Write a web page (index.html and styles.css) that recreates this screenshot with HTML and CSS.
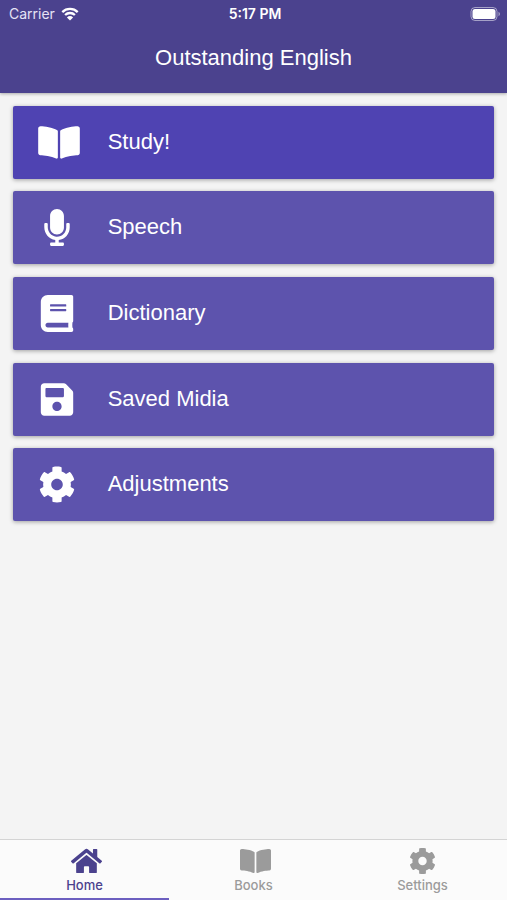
FILE: index.html
```html
<!DOCTYPE html>
<html lang="en">
<head>
<meta charset="utf-8">
<meta name="viewport" content="width=device-width, initial-scale=1">
<title>Outstanding English</title>
<link rel="stylesheet" href="styles.css">
</head>
<body>
<svg class="symbols" aria-hidden="true">
  <symbol id="book-open" viewBox="0 0 576 512"><path d="M542.22 32.05c-54.8 3.11-163.72 14.43-230.96 55.59-4.64 2.84-7.27 7.89-7.27 13.17v363.87c0 11.55 12.63 18.85 23.28 13.49 69.18-34.82 169.23-44.32 218.7-46.92 16.89-.89 30.02-14.43 30.02-30.66V62.75c.01-17.71-15.35-31.74-33.77-30.7zM264.73 87.64C197.5 46.48 88.58 35.17 33.78 32.05 15.36 31.01 0 45.04 0 62.75V400.6c0 16.24 13.13 29.78 30.02 30.66 49.49 2.6 149.59 12.11 218.77 46.95 10.62 5.35 23.21-1.94 23.21-13.46V100.63c0-5.29-2.62-10.14-7.27-12.99z"/></symbol>
  <symbol id="microphone" viewBox="0 0 352 512"><path d="M176 352c53.02 0 96-42.98 96-96V96c0-53.02-42.98-96-96-96S80 42.98 80 96v160c0 53.02 42.98 96 96 96zm160-160h-16c-8.84 0-16 7.16-16 16v48c0 74.8-64.49 134.82-140.79 127.38C96.71 376.89 48 317.11 48 250.3V208c0-8.84-7.16-16-16-16H16c-8.84 0-16 7.16-16 16v40.16c0 89.64 63.97 169.55 152 181.69V464H96c-8.84 0-16 7.16-16 16v16c0 8.84 7.16 16 16 16h160c8.84 0 16-7.16 16-16v-16c0-8.84-7.16-16-16-16h-56v-33.77C285.71 418.47 352 344.9 352 256v-48c0-8.84-7.16-16-16-16z"/></symbol>
  <symbol id="book" viewBox="0 0 448 512"><path d="M448 360V24c0-13.3-10.7-24-24-24H96C43 0 0 43 0 96v320c0 53 43 96 96 96h328c13.3 0 24-10.7 24-24v-16c0-7.5-3.5-14.3-8.9-18.7-4.2-15.4-4.2-59.3 0-74.7 5.4-4.3 8.9-11.1 8.9-18.6zM128 134c0-3.3 2.7-6 6-6h212c3.3 0 6 2.7 6 6v20c0 3.3-2.7 6-6 6H134c-3.3 0-6-2.7-6-6v-20zm0 64c0-3.3 2.7-6 6-6h212c3.3 0 6 2.7 6 6v20c0 3.3-2.7 6-6 6H134c-3.3 0-6-2.7-6-6v-20zm253.4 250H96c-17.7 0-32-14.3-32-32 0-17.6 14.4-32 32-32h285.4c-1.9 17.1-1.9 46.9 0 64z"/></symbol>
  <symbol id="save" viewBox="0 0 448 512"><path d="M433.941 129.941l-83.882-83.882A48 48 0 0 0 316.118 32H48C21.49 32 0 53.49 0 80v352c0 26.51 21.49 48 48 48h352c26.51 0 48-21.49 48-48V163.882a48 48 0 0 0-14.059-33.941zM224 416c-35.346 0-64-28.654-64-64 0-35.346 28.654-64 64-64s64 28.654 64 64c0 35.346-28.654 64-64 64zm96-304.52V212c0 6.627-5.373 12-12 12H76c-6.627 0-12-5.373-12-12V108c0-6.627 5.373-12 12-12h228.52c3.183 0 6.235 1.264 8.485 3.515l3.48 3.48A11.996 11.996 0 0 1 320 111.48z"/></symbol>
  <symbol id="cog" viewBox="0 0 512 512"><path d="M487.4 315.7l-42.6-24.6c4.3-23.2 4.3-47 0-70.2l42.6-24.6c4.9-2.8 7.1-8.6 5.5-14-11.1-35.6-30-67.8-54.7-94.6-3.8-4.1-10-5.1-14.8-2.3L380.8 110c-17.9-15.4-38.5-27.3-60.8-35.1V25.8c0-5.6-3.9-10.5-9.4-11.7-36.7-8.2-74.3-7.8-109.2 0-5.5 1.2-9.4 6.1-9.4 11.7V75c-22.2 7.9-42.8 19.8-60.8 35.1L88.7 85.5c-4.9-2.8-11-1.9-14.8 2.3-24.7 26.7-43.6 58.9-54.7 94.6-1.7 5.4.6 11.2 5.5 14L67.3 221c-4.3 23.2-4.3 47 0 70.2l-42.6 24.6c-4.9 2.8-7.1 8.6-5.5 14 11.1 35.6 30 67.8 54.7 94.6 3.8 4.1 10 5.1 14.8 2.3l42.6-24.6c17.9 15.4 38.5 27.3 60.8 35.1v49.2c0 5.6 3.9 10.5 9.4 11.7 36.7 8.2 74.3 7.8 109.2 0 5.5-1.2 9.4-6.1 9.4-11.7v-49.2c22.2-7.9 42.8-19.8 60.8-35.1l42.6 24.6c4.9 2.8 11 1.9 14.8-2.3 24.7-26.7 43.6-58.9 54.7-94.6 1.5-5.5-.7-11.3-5.6-14.1zM256 336c-44.1 0-80-35.9-80-80s35.9-80 80-80 80 35.9 80 80-35.9 80-80 80z"/></symbol>
  <symbol id="home" viewBox="0 0 576 512"><path d="M280.37 148.26L96 300.11V464a16 16 0 0 0 16 16l112.06-.29a16 16 0 0 0 15.92-16V368a16 16 0 0 1 16-16h64a16 16 0 0 1 16 16v95.64a16 16 0 0 0 16 16.05L464 480a16 16 0 0 0 16-16V300L295.67 148.26a12.19 12.19 0 0 0-15.3 0zM571.6 251.47L488 182.56V44.05a12 12 0 0 0-12-12h-56a12 12 0 0 0-12 12v72.61L318.47 43a48 48 0 0 0-61 0L4.34 251.47a12 12 0 0 0-1.6 16.9l25.5 31A12 12 0 0 0 45.15 301l235.22-193.74a12.19 12.19 0 0 1 15.3 0L530.9 301a12 12 0 0 0 16.9-1.6l25.5-31a12 12 0 0 0-1.7-16.93z"/></symbol>
</svg>

<header class="header">
  <div class="status">
    <div class="carrier">
      <span>Carrier</span>
      <svg class="wifi" viewBox="0 0 18 14" role="img" aria-label="Wi-Fi">
        <path d="M1.3 5.1a11 11 0 0 1 15.4 0M4.1 8a7 7 0 0 1 9.8 0" fill="none" stroke="currentColor" stroke-width="2.3"/>
        <path d="M9 13.6L5.9 10.4a4.5 4.5 0 0 1 6.2 0z" fill="currentColor"/>
      </svg>
    </div>
    <time class="clock">5:17 PM</time>
    <svg class="battery" viewBox="0 0 31 14" role="img" aria-label="Battery full">
      <rect x="1" y=".5" width="26" height="13" rx="4" fill="none" stroke="currentColor" opacity=".5"/>
      <rect x="2.5" y="2" width="23" height="10" rx="2.5" fill="currentColor"/>
      <path d="M28.5 4.8c2 .8 2 3.6 0 4.4z" fill="currentColor" opacity=".5"/>
    </svg>
  </div>
  <h1 class="title">Outstanding English</h1>
</header>

<main class="menu">
  <button class="card card-primary" type="button"><span class="card-icon"><svg class="icon-wide"><use href="#book-open"/></svg></span><span class="card-label">Study!</span></button>
  <button class="card" type="button"><span class="card-icon"><svg><use href="#microphone"/></svg></span><span class="card-label">Speech</span></button>
  <button class="card" type="button"><span class="card-icon"><svg><use href="#book"/></svg></span><span class="card-label">Dictionary</span></button>
  <button class="card" type="button"><span class="card-icon"><svg><use href="#save"/></svg></span><span class="card-label">Saved Midia</span></button>
  <button class="card" type="button"><span class="card-icon"><svg><use href="#cog"/></svg></span><span class="card-label">Adjustments</span></button>
</main>

<nav class="tabs">
  <a class="tab tab-active" href="#home-tab" aria-current="page"><span class="tab-icon"><svg class="icon-wide"><use href="#home"/></svg></span>Home</a>
  <a class="tab" href="#books-tab"><span class="tab-icon"><svg class="icon-wide"><use href="#book-open"/></svg></span>Books</a>
  <a class="tab" href="#settings-tab"><span class="tab-icon"><svg><use href="#cog"/></svg></span>Settings</a>
</nav>
</body>
</html>
```
FILE: styles.css
```css
* {
  box-sizing: border-box;
}

body {
  display: flex;
  flex-direction: column;
  min-height: 100vh;
  margin: 0;
  background: #f4f4f4;
  font-family: "Liberation Sans", Arial, sans-serif;
}

svg {
  fill: currentColor;
}

.symbols {
  display: none;
}

.header {
  padding-bottom: 20px;
  background: #4b428e;
  color: #fff;
  box-shadow: 0 1px 3px rgba(0, 0, 0, 0.3);
}

.status {
  display: grid;
  grid-template-columns: 1fr auto 1fr;
  align-items: center;
  height: 27px;
  padding: 0 6px 0 9px;
  font-family: Inter, sans-serif;
  font-size: 14px;
}

.carrier {
  display: flex;
  align-items: center;
  gap: 6px;
  color: #e6e3f5;
}

.wifi {
  width: 18px;
  height: 14px;
  color: #fff;
}

.clock {
  font-weight: 600;
}

.battery {
  justify-self: end;
  width: 31px;
  height: 14px;
}

.title {
  margin: 16px 0 0;
  font-size: 22px;
  font-weight: 400;
  line-height: 30px;
  text-align: center;
}

.menu {
  display: flex;
  flex: 1;
  flex-direction: column;
  gap: 2.5vw;
  padding: 2.5vw;
}

.card {
  display: flex;
  align-items: center;
  gap: 32px;
  padding: 18px 25px;
  border: 0;
  border-radius: 2px;
  background: #5d53ad;
  box-shadow: 0 1px 4px rgba(0, 0, 0, 0.35);
  color: #fff;
  font: 22px/35px "Liberation Sans", Arial, sans-serif;
  text-align: left;
}

.card-primary {
  background: #4f43b2;
}

.card-icon {
  display: flex;
  justify-content: center;
  width: 38px;
}

.card-icon svg {
  flex: none;
  width: 38px;
  height: 37px;
}

.card-icon:has(.icon-wide) {
  justify-content: flex-start;
}

.card-icon .icon-wide {
  width: 42px;
}

.card-label {
  padding-bottom: 2px;
}

.tabs {
  display: grid;
  grid-template-columns: repeat(3, 1fr);
  border-top: 1px solid #d4d4d4;
  background: #fbfbfb;
}

.tab {
  display: flex;
  flex-direction: column;
  align-items: center;
  padding: 7px 0 3px;
  border-bottom: 2px solid transparent;
  color: #9b9b9b;
  font: 500 13px/20px Inter, sans-serif;
  text-decoration: none;
}

.tab-active {
  border-color: #6c5fc0;
  color: #4b428e;
}

.tab-icon {
  width: 27px;
}

.tab-icon svg {
  display: block;
  width: 27px;
  height: 28px;
}

.tab-icon .icon-wide {
  width: 31px;
}
```
